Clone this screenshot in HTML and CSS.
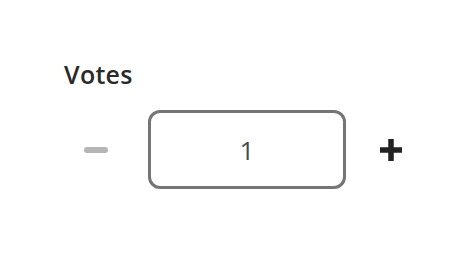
FILE: index.html
```html
<!DOCTYPE html>
<html lang="en">
  <head>
    <meta charset="UTF-8" />
    <title>Votes</title>
    <link rel="stylesheet" href="styles.css">
  </head>
  <body>
    <div class="field">
      <label for="votes">Votes</label>
      <div class="stepper">
        <button class="step minus" type="button" aria-label="Decrease" disabled>
          <svg width="24" height="6" viewBox="0 0 24 6"><rect x="0" y="0" width="24" height="6" rx="3" fill="#b5b5b5"/></svg>
        </button>
        <input type="text" id="votes" value="1" />
        <button class="step plus" type="button" aria-label="Increase">
          <svg width="24" height="24" viewBox="0 0 24 24"><path d="M12 1v22M1 12h22" stroke="#222" stroke-width="5.5" stroke-linecap="butt"/></svg>
        </button>
      </div>
    </div>
  </body>
</html>
```

FILE: styles.css
```css
* {
  margin: 0;
  padding: 0;
  box-sizing: border-box;
}

body {
  font-family: 'Open Sans', Lato, sans-serif;
  background: #fff;
}

.field {
  padding: 59px 0 0 64px;
}

label {
  display: block;
  font-size: 25px;
  font-weight: 600;
  color: #2a2a2a;
  line-height: 30px;
  letter-spacing: 0.3px;
  margin-bottom: 21px;
}

.stepper {
  display: flex;
  align-items: center;
}

.step {
  width: 64px;
  height: 64px;
  border: none;
  background: none;
  display: flex;
  align-items: center;
  justify-content: center;
  cursor: pointer;
}

.minus {
  margin-right: 20px;
}

.plus {
  margin-left: 13px;
}

input[type="text"] {
  width: 198px;
  height: 79px;
  border: 3px solid #757575;
  border-radius: 12px;
  text-align: center;
  font-family: 'Open Sans', Lato, sans-serif;
  font-size: 26px;
  color: #4a4a4a;
  background: #fff;
  outline: none;
}
```
